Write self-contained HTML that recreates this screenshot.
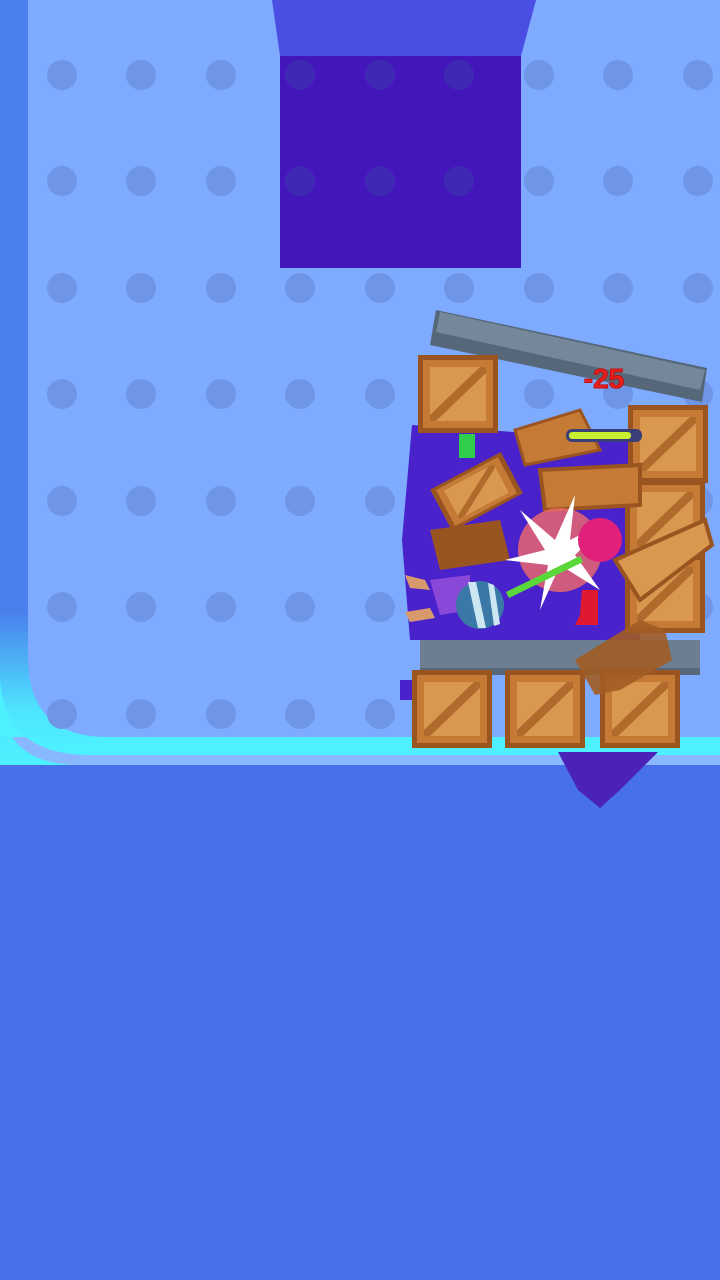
<!DOCTYPE html>
<html><head><meta charset="utf-8"><style>
html,body{margin:0;padding:0;width:720px;height:1280px;overflow:hidden;background:#4870ea}
svg{display:block}
</style></head><body>
<svg width="720" height="1280" viewBox="0 0 720 1280" xmlns="http://www.w3.org/2000/svg">
<defs>
<linearGradient id="lb" x1="0" y1="0" x2="0" y2="1">
<stop offset="0" stop-color="#4a80ec"/><stop offset="0.8" stop-color="#4a80ec"/><stop offset="0.93" stop-color="#4ee6ff"/><stop offset="1" stop-color="#4ef0ff"/>
</linearGradient>
<g id="crate">
<rect x="0" y="0" width="80" height="78" fill="#9a5420"/>
<rect x="5" y="5" width="70" height="68" fill="#c57a36"/>
<rect x="12" y="12" width="56" height="54" fill="#d9974f"/>
<path d="M12 60 L62 12 L68 12 L68 18 L18 66 L12 66Z" fill="#b06a2c"/>
</g>
</defs>
<rect x="0" y="0" width="720" height="765" fill="url(#lb)"/>
<path d="M0 690 Q0 765 80 765 L720 765 L720 737 L0 737Z" fill="#8ab8ff"/>
<path d="M0 680 Q5 755 90 755 L720 755 L720 737 L0 737Z" fill="#4ef0ff"/>
<path d="M28 0 L720 0 L720 737 L108 737 Q28 737 28 657Z" fill="#7eaaff"/>
<g fill="#6f95e6">
<g id="row">
<circle cx="62" cy="75" r="15"/><circle cx="141" cy="75" r="15"/><circle cx="221" cy="75" r="15"/><circle cx="300" cy="75" r="15"/><circle cx="380" cy="75" r="15"/><circle cx="459" cy="75" r="15"/><circle cx="539" cy="75" r="15"/><circle cx="618" cy="75" r="15"/><circle cx="698" cy="75" r="15"/>
</g>
<use href="#row" y="106"/><use href="#row" y="213"/><use href="#row" y="319"/><use href="#row" y="426"/><use href="#row" y="532"/>
<circle cx="62" cy="714" r="15"/><circle cx="141" cy="714" r="15"/><circle cx="221" cy="714" r="15"/><circle cx="300" cy="714" r="15"/><circle cx="380" cy="714" r="15"/>
</g>
<path d="M272 0 L536 0 L521 56 L280 56Z" fill="#4a4ee2"/>
<rect x="280" y="56" width="241" height="212" fill="#4316bc"/>
<g fill="#3e30b0" opacity="0.7"><circle cx="300" cy="75" r="15"/><circle cx="380" cy="75" r="15"/><circle cx="459" cy="75" r="15"/><circle cx="300" cy="181" r="15"/><circle cx="380" cy="181" r="15"/><circle cx="459" cy="181" r="15"/></g>
<path d="M412 425 L630 440 L640 640 L410 640 L402 540Z" fill="#4a22cc"/>
<path d="M400 680 L420 680 L420 700 L400 700Z" fill="#4a22cc"/>
<path d="M558 752 L658 752 L620 790 L600 808 L578 790Z" fill="#4a22b8"/>
<path d="M436 310 L707 368 L702 402 L430 345Z" fill="#56677a"/>
<path d="M440 312 L705 370 L700 390 L436 332Z" fill="#75889a"/>
<use href="#crate" x="418" y="355"/>
<use href="#crate" x="628" y="405" />
<use href="#crate" x="625" y="480"/>
<use href="#crate" x="625" y="555"/>
<g transform="rotate(-28 470 490)"><use href="#crate" x="435" y="465" transform="scale(1,0.6) translate(0,320)"/></g>
<path d="M540 470 L640 465 L640 505 L545 510Z" fill="#c57a36" stroke="#9a5420" stroke-width="4"/>
<path d="M430 530 L500 520 L510 560 L440 570Z" fill="#9a5420"/>
<path d="M515 430 L580 410 L600 450 L525 465Z" fill="#c57a36" stroke="#9a5420" stroke-width="3"/>
<path d="M615 560 L705 520 L712 545 L640 600Z" fill="#d9974f" stroke="#9a5420" stroke-width="4"/>
<rect x="420" y="640" width="280" height="35" fill="#6c7e90"/>
<rect x="420" y="668" width="280" height="7" fill="#56677a"/>
<use href="#crate" x="412" y="670"/>
<use href="#crate" x="505" y="670"/>
<use href="#crate" x="600" y="670"/>
<path d="M575 660 L640 620 L665 630 L672 660 L620 690 L595 695Z" fill="#a25c24" opacity="0.9"/>
<rect x="566" y="429" width="76" height="13" rx="6" fill="#3a3f7a"/>
<rect x="569" y="432" width="62" height="7" rx="3" fill="#c8f030"/>
<rect x="459" y="434" width="16" height="24" fill="#2fcf4c"/>
<circle cx="560" cy="550" r="42" fill="#f06a6a" opacity="0.8"/>
<path d="M520 510 L555 540 L575 495 L570 540 L610 520 L575 555 L600 590 L560 565 L540 610 L548 565 L505 560 L545 550Z" fill="#fff"/>
<circle cx="600" cy="540" r="22" fill="#e0207a"/>
<path d="M582 590 L598 590 L598 625 L575 625 L580 615Z" fill="#e01830"/>
<path d="M506 592 L580 556 L583 562 L509 598Z" fill="#5ad83a"/>
<path d="M430 580 L470 575 L470 610 L440 615Z" fill="#8a48d8"/>
<path d="M405 575 L425 580 L430 590 L410 588Z" fill="#d89a6c"/>
<path d="M405 612 L430 608 L435 618 L410 622Z" fill="#d89a6c"/>
<circle cx="480" cy="605" r="24" fill="#3a78a8"/>
<path d="M468 582 L476 582 L486 628 L478 628Z" fill="#cce6f2"/>
<path d="M488 583 L494 585 L500 624 L494 626Z" fill="#cce6f2"/>
<text x="604" y="388" font-family="Liberation Sans, sans-serif" font-size="28" font-weight="bold" fill="#e8201e" stroke="#c01010" stroke-width="1" text-anchor="middle">-25</text>
</svg>
</body></html>
